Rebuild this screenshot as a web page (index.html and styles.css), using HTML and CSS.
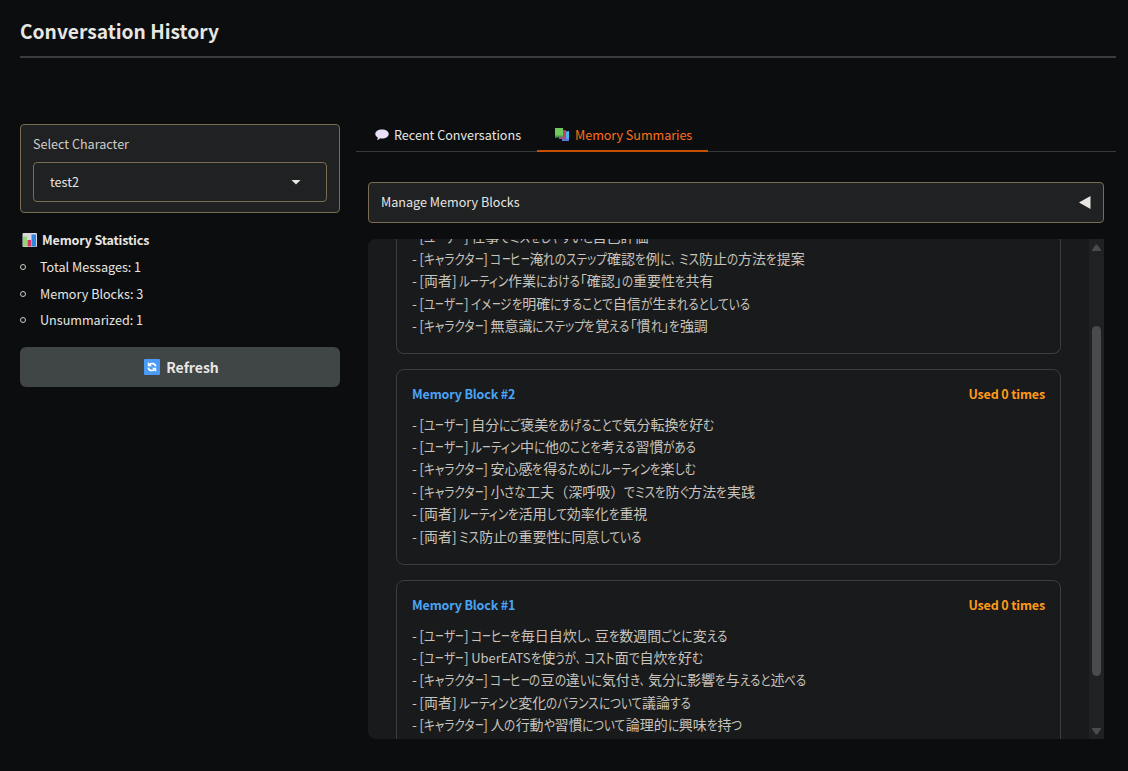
FILE: index.html
```
<!doctype html>
<html lang="ja">
<head>
    <title>Conversation History</title>
    <meta charset="utf-8">
    <link rel="stylesheet" href="styles.css">
</head>
<body>
    <header>
        <h2>Conversation History</h2>
    </header>
    <main class="row">
        <aside class="sidebar">
            <div class="block">
                <div class="block-label">Select Character</div>
                <div class="dropdown">
                    <span>test2</span>
                    <svg width="10" height="6" viewBox="0 0 10 6"><path d="M.5 1h9L5 5.500z" fill="#e8e6e3"/></svg>
                </div>
            </div>
            <div class="stats">
                <h3>
                    <svg width="15" height="15" viewBox="0 0 15 15">
                        <rect x=".5" width="14.500" height="14" rx="1" fill="#dcd6e2"/>
                        <rect x="1" y="3.500" width="4" height="10" fill="#8fd873"/>
                        <rect x="5.500" y="7" width="3.500" height="6.500" fill="#d8336b"/>
                        <rect x="9.500" y="1.500" width="4.500" height="12" fill="#2f86dd"/>
                    </svg>
                    <span>Memory Statistics</span>
                </h3>
                <ul>
                    <li><span>Total Messages: 1</span></li>
                    <li><span>Memory Blocks: 3</span></li>
                    <li><span>Unsummarized: 1</span></li>
                </ul>
            </div>
            <button class="refresh">
                <svg width="16" height="16" viewBox="0 0 16 16">
                    <rect width="16" height="16" rx="1" fill="#4b9bf5"/>
                    <path d="M5.500 5.600C7 4 11.300 3.800 11.600 7.400M10.500 10.400C9 12 4.700 12.200 4.400 8.600" fill="none" stroke="#fff" stroke-width="1.700"/>
                    <path d="M3.800 3v4.300h4.300zM12.200 13V8.700H7.900z" fill="#fff"/>
                </svg>
                <span>Refresh</span>
            </button>
        </aside>

        <section class="content">
            <nav class="tabs">
                <div class="tab">
                    <svg width="14" height="12" viewBox="0 0 14 12"><path d="M7 .5c4 0 6.700 2 6.700 4.500S11 9.500 7 9.500c-.7 0-1.400 0-2-.2C4.300 10.300 3.300 10.800 2 10.800c.6-.6.8-1.400.8-2.300C1.200 7.700.3 6.500.3 5 .3 2.500 3 .5 7 .5z" fill="#e9dff6"/></svg>
                    <span>Recent Conversations</span>
                </div>
                <div class="tab selected">
                    <svg width="14" height="13" viewBox="0 0 14 13">
                        <path d="M7 4l7-1v10H7z" fill="#45b5f0"/>
                        <path d="M7 10.500h7V13H7z" fill="#5a78d8"/>
                        <path d="M4 2.500l7-.5v9H4z" fill="#cf3a60"/>
                        <path d="M4 9l6-.5V11H4z" fill="#a84c86"/>
                        <path d="M0 0h8v8.500L0 9.500z" fill="#70c95a"/>
                        <path d="M0 7.500h7.500V9L0 9.500z" fill="#3e9d55"/>
                    </svg>
                    <span>Memory Summaries</span>
                </div>
            </nav>
            <div class="accordion">
                <span>Manage Memory Blocks</span>
                <svg width="12" height="13" viewBox="0 0 12 13"><path d="M0 6.500L11.500 0v13z" fill="#e8e6e3"/></svg>
            </div>
            <div class="viewer">
                <div class="cards">
                    <article class="card scrolled">
                        <p>- [ユーザー] 仕事でミスをしやすいと自己評価</p>
                        <p>- [キャラクター] コーヒー淹れのステップ確認を例に、ミス防止の方法を提案</p>
                        <p>- [両者] ルーティン作業における「確認」の重要性を共有</p>
                        <p>- [ユーザー] イメージを明確にすることで自信が生まれるとしている</p>
                        <p>- [キャラクター] 無意識にステップを覚える「慣れ」を強調</p>
                    </article>
                    <article class="card">
                        <div class="card-head"><b>Memory Block #2</b><b class="used">Used 0 times</b></div>
                        <p>- [ユーザー] 自分にご褒美をあげることで気分転換を好む</p>
                        <p>- [ユーザー] ルーティン中に他のことを考える習慣がある</p>
                        <p>- [キャラクター] 安心感を得るためにルーティンを楽しむ</p>
                        <p>- [キャラクター] 小さな工夫（深呼吸）でミスを防ぐ方法を実践</p>
                        <p>- [両者] ルーティンを活用して効率化を重視</p>
                        <p>- [両者] ミス防止の重要性に同意している</p>
                    </article>
                    <article class="card">
                        <div class="card-head"><b>Memory Block #1</b><b class="used">Used 0 times</b></div>
                        <p>- [ユーザー] コーヒーを毎日自炊し、豆を数週間ごとに変える</p>
                        <p>- [ユーザー] UberEATSを使うが、コスト面で自炊を好む</p>
                        <p>- [キャラクター] コーヒーの豆の違いに気付き、気分に影響を与えると述べる</p>
                        <p>- [両者] ルーティンと変化のバランスについて議論する</p>
                        <p>- [キャラクター] 人の行動や習慣について論理的に興味を持つ</p>
                    </article>
                </div>
                <div class="scrollbar">
                    <svg width="9" height="7" viewBox="0 0 9 7"><path d="M3.800.5h1.400L9 6v1H0V6z" fill="#484c4d"/></svg>
                    <div class="thumb"></div>
                    <svg width="9" height="7" viewBox="0 0 9 7"><path d="M0 0h9v1L5.200 6.500H3.800L0 1z" fill="#484c4d"/></svg>
                </div>
            </div>
        </section>
    </main>
    <script src="script.js"></script>
</body>
</html>
```

FILE: styles.css
```
* {
    margin: 0;
    padding: 0;
    box-sizing: border-box;
}

body {
    background: #0b0d0e;
    color: #e8e6e3;
    font-family: "Noto Sans CJK JP", "Noto Sans", sans-serif;
    font-size: 12.6px;
    height: 771px;
    padding: 12px 12px 0 20px;
    overflow: hidden;
    white-space: nowrap;
}

svg {
    display: block;
    flex: none;
}

header {
    height: 46px;
    border-bottom: 2px solid #3a3d3e;
}

h2 {
    font-size: 19.2px;
    font-weight: 600;
    line-height: 38px;
}

.row {
    display: flex;
    gap: 16px;
    margin-top: 61px;
}

.sidebar {
    width: 320px;
    padding-top: 5px;
}

.block {
    height: 89px;
    padding: 9px 12px;
    background: #1f2122;
    border: 1px solid #7a6c53;
    border-radius: 4px;
}

.block-label {
    line-height: 20px;
    margin-bottom: 8px;
    color: #d1cdc7;
}

.dropdown {
    display: flex;
    align-items: center;
    justify-content: space-between;
    height: 40px;
    padding: 0 25px 0 16px;
    border: 1px solid #7a6c53;
    border-radius: 4px;
}

.dropdown span {
    line-height: 20px;
    padding-bottom: 1px;
}

.stats {
    padding-top: 15px;
}

h3 {
    display: flex;
    align-items: center;
    gap: 5px;
    padding-left: 2px;
    font-size: 12.5px;
    font-weight: 600;
    letter-spacing: -0.15px;
    line-height: 24px;
}

ul {
    list-style: none;
    margin-top: 2px;
}

li {
    display: flex;
    align-items: center;
    gap: 14px;
    line-height: 26.6px;
}

li::before {
    content: "";
    box-sizing: border-box;
    width: 6px;
    height: 6px;
    border: 1px solid #d1cdc7;
    border-radius: 50%;
}

.refresh {
    display: flex;
    align-items: center;
    justify-content: center;
    gap: 6px;
    width: 320px;
    height: 40px;
    margin-top: 13px;
    padding-left: 3px;
    background: #404546;
    border: none;
    border-radius: 6px;
    color: #e8e6e3;
    font-family: inherit;
    font-size: 14px;
    font-weight: 600;
}

.content {
    width: 760px;
}

.tabs {
    display: flex;
    height: 33px;
    border-bottom: 1px solid #35393a;
}

.tab {
    display: flex;
    align-items: center;
    gap: 5px;
    height: 33px;
    padding: 0 16px 2px 19px;
}

.selected {
    gap: 6px;
    padding: 0 16px 0 18px;
    color: #ff6f1a;
    border-bottom: 2px solid #c75000;
    letter-spacing: -0.05px;
}

.tab span {
    line-height: 31px;
}

.accordion {
    display: flex;
    align-items: center;
    justify-content: space-between;
    height: 41px;
    margin: 30px 12px 0;
    padding: 0 12px;
    background: #1f2122;
    border: 1px solid #7a6c53;
    border-radius: 4px;
}

.accordion span {
    line-height: 20px;
    padding-bottom: 1px;
}

.viewer {
    display: flex;
    justify-content: space-between;
    height: 500px;
    margin: 16px 12px 0;
    padding-left: 28px;
    background: #181a1b;
    border-radius: 8px 0 0 8px;
    overflow: hidden;
}

.cards {
    width: 665px;
    margin-top: -14.4px;
}

.card {
    height: 196px;
    margin-bottom: 15px;
    padding: 15px;
    border: 1px solid #3a3e40;
    border-radius: 8px;
}

.scrolled {
    height: 129.4px;
    padding-top: 0;
    border-top: none;
    border-radius: 0 0 8px 8px;
}

.card-head {
    display: flex;
    justify-content: space-between;
    height: 27.6px;
    color: #4aa3f5;
    font-size: 12.5px;
    letter-spacing: -0.15px;
    line-height: 18px;
}

.card-head b {
    font-weight: 600;
}

.card-head .used {
    color: #ff9b1a;
}

.card p {
    height: 22.4px;
    color: #c8c3bc;
    font-size: 14px;
    line-height: 22.4px;
    font-feature-settings: "palt";
    word-spacing: -0.7px;
}

.kata, .bar, .hira, .comma {
    display: inline-block;
    transform-origin: 0 50%;
}

.comma, .paren {
    font-feature-settings: normal;
}

.latin {
    font-size: 13px;
}

.scrollbar {
    display: flex;
    flex-direction: column;
    align-items: center;
    justify-content: space-between;
    width: 15px;
    padding: 5px 0 4px;
    background: #1f2122;
}

.thumb {
    width: 9px;
    height: 350px;
    margin-top: 70px;
    margin-bottom: 48px;
    background: #484c4d;
    border-radius: 5px;
}
```

FILE: script.js
```
// condensed kana, full width kanji
var scales = { kata: 0.83, bar: 0.63, hira: 0.825, comma: 0.58 };

document.querySelectorAll(".card p").forEach(function (p) {
    p.innerHTML = p.textContent
        .replace(/[A-Za-z]+|[ァ-ヺ]+|ー|[ぁ-ん]+|、|[（）]/g, function (run) {
            var name = "hira";
            if (/[A-Za-z]/.test(run)) name = "latin";
            else if (/[ァ-ヺ]/.test(run)) name = "kata";
            else if (run == "ー") name = "bar";
            else if (run == "、") name = "comma";
            else if (/[（）]/.test(run)) name = "paren";
            return '<span class="' + name + '">' + run + '</span>';
        });
});

for (const name in scales) {
    document.querySelectorAll("." + name).forEach(function (el) {
        var w = el.getBoundingClientRect().width;
        el.style.transform = "scaleX(" + scales[name] + ")";
        el.style.marginRight = w * (scales[name] - 1) + "px";
    });
}
```
